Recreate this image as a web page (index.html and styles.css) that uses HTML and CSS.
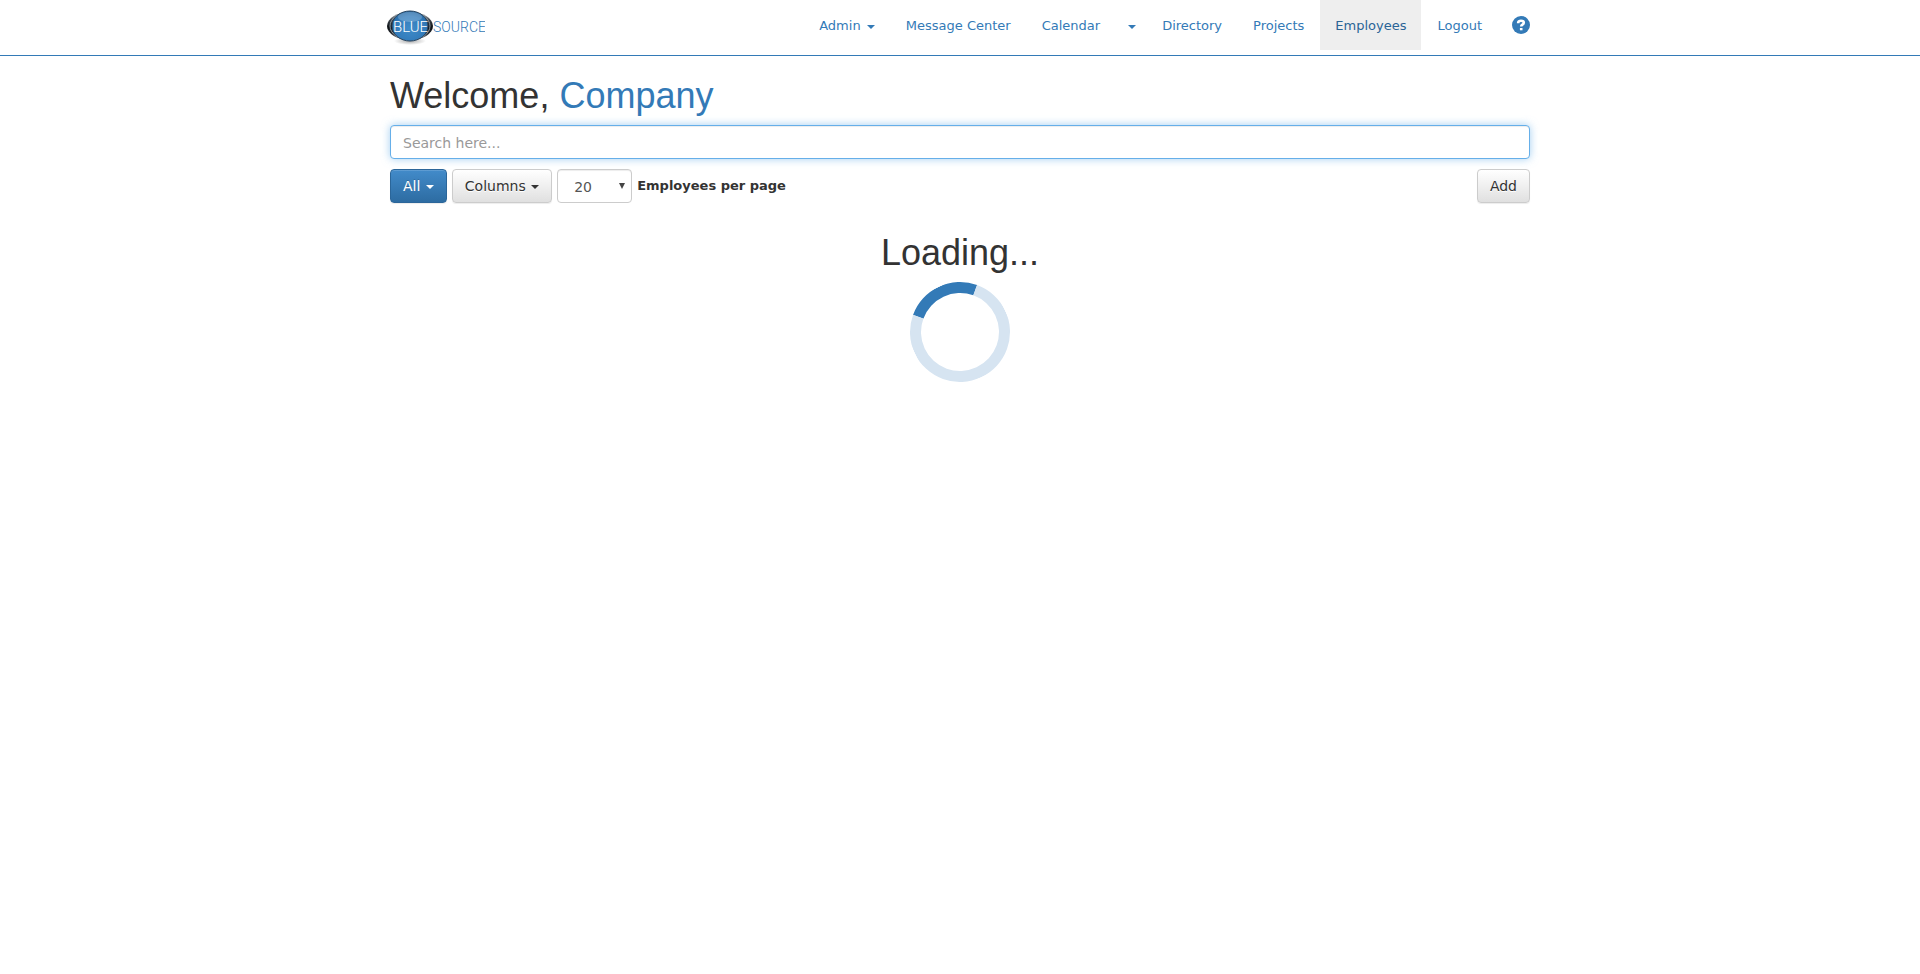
FILE: index.html
```html
<!DOCTYPE html>
<html lang="en">
<head>
<meta charset="utf-8">
<title>BlueSource - Employees</title>
<link rel="stylesheet" href="styles.css">
</head>
<body>
<header class="navbar">
  <div class="container navbar-inner">
    <a class="brand" href="#" aria-label="BlueSource">
      <svg class="logo" width="98" height="36" viewBox="0 0 98 36">
        <defs>
          <linearGradient id="rim" x1="0" x2="0" y1="0" y2="1">
            <stop offset="0" stop-color="#b9bfc4"/>
            <stop offset=".3" stop-color="#3a4148"/>
            <stop offset=".55" stop-color="#0d1115"/>
            <stop offset=".8" stop-color="#2a3036"/>
            <stop offset="1" stop-color="#9ba1a6"/>
          </linearGradient>
          <radialGradient id="orb" cx=".5" cy=".6" r=".6">
            <stop offset="0" stop-color="#3f8bc9"/>
            <stop offset=".7" stop-color="#327bba"/>
            <stop offset="1" stop-color="#2668a3"/>
          </radialGradient>
          <radialGradient id="shade">
            <stop offset="0" stop-color="#aaa"/>
            <stop offset="1" stop-color="#fff"/>
          </radialGradient>
        </defs>
        <ellipse cx="23" cy="31" rx="16" ry="4" fill="url(#shade)"/>
        <ellipse cx="23" cy="16" rx="23" ry="14" fill="url(#rim)"/>
        <ellipse cx="23" cy="16" rx="20" ry="14" fill="none" stroke="#8f979e"/>
        <ellipse cx="23" cy="16" rx="18" ry="15" fill="url(#orb)" stroke="#27445f"/>
        <ellipse cx="23" cy="7" rx="12" ry="5" fill="#fff" opacity=".22"/>
        <text class="logo-text logo-light" x="6" y="22">BLUE</text>
        <text class="logo-text" x="46" y="22">SOURCE</text>
      </svg>
    </a>
    <nav class="nav">
      <a class="nav-link" href="#">Admin <span class="caret"></span></a>
      <a class="nav-link" href="#">Message Center</a>
      <a class="nav-link" href="#">Calendar</a>
      <a class="nav-link nav-toggle" href="#" aria-label="Calendar menu"><span class="caret"></span></a>
      <a class="nav-link" href="#">Directory</a>
      <a class="nav-link" href="#">Projects</a>
      <a class="nav-link active" href="#">Employees</a>
      <a class="nav-link" href="#">Logout</a>
      <a class="nav-link nav-help" href="#" aria-label="Help">
        <svg width="18" height="18" viewBox="0 0 18 18">
          <circle cx="9" cy="9" r="9" fill="#337ab7"/>
          <path d="M6.200 7.200V6.500Q6.500 4.800 9 4.800Q11.800 4.800 11.800 6.800Q11.800 8 10.300 8.700Q9.200 9.200 9.200 10.500" fill="none" stroke="#fff" stroke-width="2.600"/>
          <path d="M7.900 12h2.600v2.300H7.900z" fill="#fff"/>
        </svg>
      </a>
    </nav>
  </div>
</header>
<main class="container">
  <h1 class="heading">Welcome, <a href="#">Company</a></h1>
  <input class="search" type="text" placeholder="Search here..." aria-label="Search" autofocus>
  <div class="toolbar">
    <button class="btn btn-primary" type="button">All <span class="caret"></span></button>
    <button class="btn" type="button">Columns <span class="caret"></span></button>
    <div class="select-wrap">
      <select class="page-size" id="page-size"><option>20</option><option>50</option><option>100</option></select>
    </div>
    <label class="page-label" for="page-size">Employees per page</label>
    <button class="btn btn-add" type="button">Add</button>
  </div>
  <section class="loading" role="status">
    <h1 class="heading">Loading...</h1>
    <div class="spinner"></div>
  </section>
</main>
</body>
</html>
```
FILE: styles.css
```css
* {
  box-sizing: border-box;
}

body {
  margin: 0;
  background: #fff;
  color: #333;
  font: 13px/20px "DejaVu Sans", Verdana, sans-serif;
}

a {
  color: #337ab7;
  text-decoration: none;
}

svg {
  display: block;
}

.container {
  max-width: 1170px;
  margin: 0 auto;
  padding: 0 15px;
}

.navbar {
  border-bottom: 1px solid #337ab7;
}

.navbar-inner {
  display: flex;
  justify-content: space-between;
  align-items: flex-start;
  padding-bottom: 5px;
}

.brand {
  margin: 10px 0 0 -3px;
}

.logo-text {
  font-family: Roboto, sans-serif;
  font-size: 14px;
  font-weight: 300;
  fill: #337ab7;
}

.logo-light {
  font-size: 15px;
  fill: #fff;
}

.nav {
  display: flex;
  gap: 1px;
}

.nav-link {
  padding: 16px 15px 14px;
}

.nav-toggle {
  padding: 16px 10px 14px;
}

.nav-help {
  padding: 16px 0 0 14px;
}

.active {
  background: #eee;
  color: #2a6496;
}

.caret {
  display: inline-block;
  margin-left: 2px;
  border-top: 4px solid;
  border-right: 4px solid transparent;
  border-left: 4px solid transparent;
  vertical-align: middle;
}

.heading {
  margin: 0 0 10px;
  font: 500 36px/39px "Liberation Sans", Arial, sans-serif;
}

main .heading:first-child {
  padding-top: 20px;
}

.search {
  display: block;
  width: 100%;
  height: 34px;
  padding: 7px 12px 5px;
  border: 1px solid #66afe9;
  border-radius: 4px;
  outline: 0;
  box-shadow: inset 0 1px 1px rgba(0, 0, 0, .075), 0 0 8px rgba(102, 175, 233, .6);
  color: #555;
  font: 14px/20px "DejaVu Sans", Verdana, sans-serif;
}

.search::placeholder {
  color: #999;
}

.toolbar {
  display: flex;
  gap: 5px;
  margin-top: 10px;
}

.btn {
  height: 34px;
  padding: 0 12px;
  border: 1px solid #ccc;
  border-radius: 4px;
  background: linear-gradient(#fff, #e0e0e0);
  box-shadow: inset 0 1px 0 rgba(255, 255, 255, .15), 0 1px 1px rgba(0, 0, 0, .075);
  color: #333;
  font: 14px/20px "DejaVu Sans", Verdana, sans-serif;
  text-shadow: 0 1px 0 #fff;
}

.btn .caret {
  margin-left: 1px;
}

.btn-primary {
  border-color: #2b669a;
  background: linear-gradient(#428bca, #2d6ca2);
  color: #fff;
  text-shadow: 0 -1px 0 rgba(0, 0, 0, .2);
}

.btn-add {
  margin-left: auto;
}

.select-wrap {
  position: relative;
}

.select-wrap::after {
  content: "";
  position: absolute;
  top: 14px;
  right: 7px;
  border-top: 6px solid #444;
  border-right: 3px solid transparent;
  border-left: 3px solid transparent;
  pointer-events: none;
}

.page-size {
  appearance: none;
  width: 75px;
  height: 34px;
  padding: 2px 16px 0;
  border: 1px solid #ccc;
  border-radius: 4px;
  background: #fff;
  box-shadow: inset 0 1px 1px rgba(0, 0, 0, .075);
  color: #555;
  font: 14px/20px "DejaVu Sans", Verdana, sans-serif;
}

.page-label {
  padding-top: 7px;
  font-weight: 700;
}

.loading {
  margin-top: 30px;
}

.loading .heading:first-child {
  padding-top: 0;
  text-align: center;
}

.spinner {
  width: 100px;
  height: 100px;
  margin: 0 auto;
  border: 11px solid #d6e4f1;
  border-top-color: #337ab7;
  border-radius: 50%;
  transform: rotate(-25deg);
}
```
